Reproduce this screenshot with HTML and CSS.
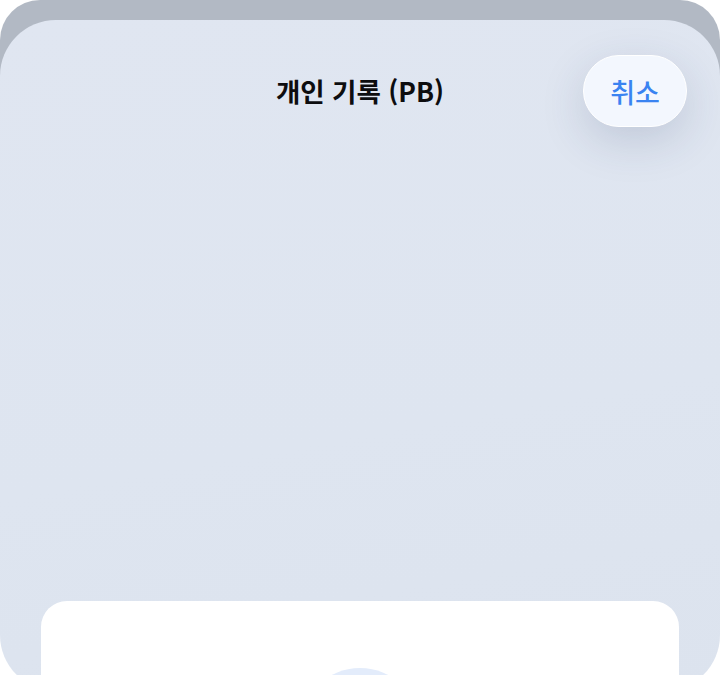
FILE: index.html
```html
<!DOCTYPE html>
<html lang="ko">
<head>
<meta charset="utf-8">
<title>개인 기록 (PB)</title>
<link rel="stylesheet" href="styles.css">
</head>
<body>
<div class="device">
  <div class="sheet">
    <header class="header">
      <h1 class="title">개인 기록 (PB)</h1>
      <button class="cancel" type="button">취소</button>
    </header>
    <section class="card">
      <div class="avatar"></div>
    </section>
  </div>
</div>
</body>
</html>
```
FILE: styles.css
```css
html, body {
  margin: 0;
  padding: 0;
  height: 675px;
  overflow: hidden;
  background: #ffffff;
  font-family: "Noto Sans CJK KR", "Noto Sans", sans-serif;
}

.device {
  border-radius: 40px 40px 0 0;
  background: linear-gradient(#b2b9c4 0, #b2b9c4 160px, transparent 160px);
  padding-top: 20px;
}

.sheet {
  height: 671px;
  border-radius: 56px;
  background: linear-gradient(170deg, #e0e6f1 0%, #dee5f0 60%, #dce3ee 100%);
  overflow: hidden;
  display: flex;
  flex-direction: column;
}

.header {
  display: grid;
  grid-template-columns: 1fr auto 1fr;
  align-items: center;
  padding: 35px 33px 0 33px;
}

.title {
  grid-column: 2;
  margin: 0;
  font-size: 26.5px;
  font-weight: 700;
  color: #0d0d0f;
  letter-spacing: 0;
  line-height: 1;
}

.cancel {
  grid-column: 3;
  justify-self: end;
  width: 104px;
  height: 72px;
  border-radius: 36px;
  border: 1px solid #ffffff;
  background: #f3f7fe;
  color: #3a83f1;
  font-family: "Noto Sans CJK KR", "Noto Sans", sans-serif;
  font-size: 27px;
  font-weight: 500;
  padding: 0;
  box-shadow: 0 14px 44px rgba(40, 60, 100, 0.17);
}

.card {
  margin: 474px 41px 0 41px;
  flex: 1;
  background: #ffffff;
  border-radius: 26px 26px 0 0;
  display: flex;
  justify-content: center;
  padding-top: 67px;
}

.avatar {
  width: 122px;
  height: 122px;
  border-radius: 50%;
  background: #e3ecfb;
}
```
